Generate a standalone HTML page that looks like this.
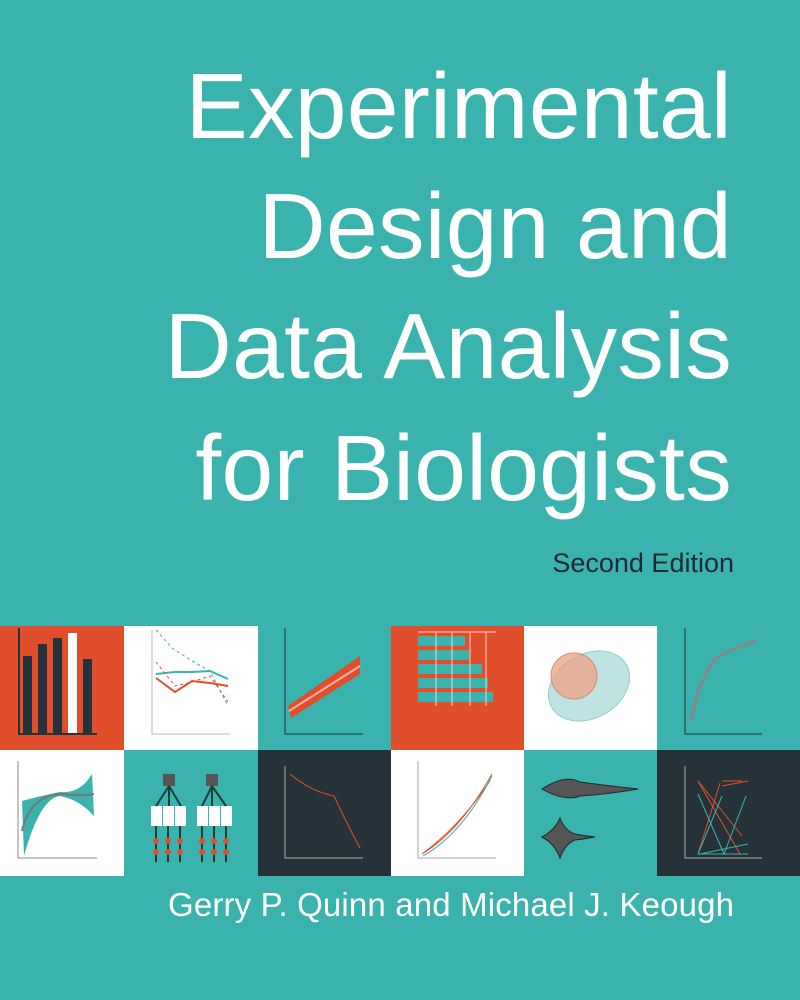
<!DOCTYPE html>
<html><head><style>
body{margin:0;width:800px;height:1000px;background:#3ab3ae;position:relative;overflow:hidden;font-family:"Liberation Sans",sans-serif;color:#fff}
.t{position:absolute;right:68px;font-size:93px;line-height:1;white-space:nowrap;letter-spacing:0.3px}
.se{position:absolute;right:66px;top:548px;font-size:27px;color:#1f2a30}
.au{position:absolute;left:168px;top:886px;font-size:33px;letter-spacing:0.15px}
</style></head><body>
<div class="t" style="top:60px">Experimental</div>
<div class="t" style="top:180px">Design and</div>
<div class="t" style="top:300px">Data Analysis</div>
<div class="t" style="top:422px">for Biologists</div>
<div class="se">Second Edition</div>
<svg style="position:absolute;left:0;top:626px" width="800" height="250">
<rect x="0" y="0" width="124" height="124" fill="#e04e2c"/>
<rect x="124" y="0" width="134" height="124" fill="#fff"/>
<rect x="391" y="0" width="133" height="124" fill="#e04e2c"/>
<rect x="524" y="0" width="133" height="124" fill="#fff"/>
<rect x="0" y="124" width="124" height="126" fill="#fff"/>
<rect x="258" y="124" width="133" height="126" fill="#26323a"/>
<rect x="391" y="124" width="133" height="126" fill="#fff"/>
<rect x="657" y="124" width="143" height="126" fill="#26323a"/>
<g fill="#26323a"><rect x="23" y="30" width="9" height="78"/><rect x="38" y="18" width="9" height="90"/><rect x="53" y="12" width="9" height="96"/><rect x="83" y="33" width="9" height="75"/></g>
<rect x="68" y="7" width="9" height="101" fill="#fff"/>
<path d="M19 2V108H97" stroke="#26323a" stroke-width="2" fill="none"/>
<path d="M152 4V108H230" stroke="#bbb" fill="none"/>
<path d="M156 4L172 22L192 35L210 45L228 80" stroke="#3ab3ae" stroke-dasharray="3 3" fill="none"/>
<path d="M156 48L175 46L192 46L210 45L228 53" stroke="#3ab3ae" stroke-width="2" fill="none"/>
<path d="M156 52L175 66L192 55L210 57L228 60" stroke="#e04e2c" stroke-width="2" fill="none"/>
<path d="M156 36L175 60L192 56L210 50L228 76" stroke="#e04e2c" stroke-dasharray="3 3" fill="none"/>
<path d="M285 2V108H363" stroke="#26323a" fill="none"/>
<path d="M288 80L360 30L360 48L291 92Z" fill="#e04e2c"/><path d="M289 85L360 40" stroke="#f7b0a0" stroke-width="2"/>
<g fill="#3ab3ae"><rect x="418" y="10" width="47" height="10"/><rect x="418" y="24" width="51" height="10"/><rect x="418" y="38" width="64" height="10"/><rect x="418" y="52" width="70" height="10"/><rect x="418" y="66" width="75" height="10"/></g>
<path d="M418 6H496M436 6V80M452 6V80M470 6V80M486 6V80" stroke="#f8d0c0" fill="none"/>
<ellipse cx="589" cy="60" rx="43" ry="32" transform="rotate(-30 589 60)" fill="#bfe3e2" stroke="#8fcfcc"/>
<circle cx="574" cy="50" r="23" fill="#eea283" fill-opacity=".75" stroke="#e08a70"/>
<path d="M685 2V108H762" stroke="#26323a" fill="none"/>
<path d="M690 95L700 60L712 36L722 28L738 22L756 14" stroke="#888" stroke-width="3" fill="none"/>
<path d="M18 135V232H97" stroke="#888" fill="none"/>
<path d="M22 175Q40 170 60 166Q80 168 92 148L94 190Q80 174 60 170Q40 172 24 230Z" fill="#3ab3ae"/>
<path d="M22 205Q30 170 60 168Q85 170 94 168" stroke="#777" stroke-width="2" fill="none"/>
<rect x="163" y="148" width="12" height="12" fill="#555"/><rect x="206" y="148" width="12" height="12" fill="#555"/>
<g fill="#fff"><rect x="151" y="180" width="11" height="20"/><rect x="163" y="180" width="11" height="20"/><rect x="175" y="180" width="11" height="20"/><rect x="197" y="180" width="11" height="20"/><rect x="209" y="180" width="11" height="20"/><rect x="221" y="180" width="11" height="20"/></g>
<path d="M169 160L156 180M169 160V180M169 160L181 180M212 160L202 180M212 160V180M212 160L226 180M156 200V236M168 200V236M180 200V236M202 200V236M214 200V236M226 200V236" stroke="#1f3b3a" stroke-width="2"/>
<g fill="#e04e2c"><circle cx="156" cy="215" r="3"/><circle cx="168" cy="215" r="3"/><circle cx="180" cy="215" r="3"/><circle cx="202" cy="215" r="3"/><circle cx="214" cy="215" r="3"/><circle cx="226" cy="215" r="3"/><circle cx="156" cy="226" r="3"/><circle cx="168" cy="226" r="3"/><circle cx="180" cy="226" r="3"/><circle cx="202" cy="226" r="3"/><circle cx="214" cy="226" r="3"/><circle cx="226" cy="226" r="3"/></g>
<path d="M285 140V232H363" stroke="#aaa" fill="none"/>
<path d="M290 148Q310 165 334 170Q348 200 360 222" stroke="#e04e2c" fill="none"/>
<path d="M418 135V232H496" stroke="#aaa" fill="none"/>
<path d="M422 228Q460 205 492 148M422 228Q460 200 490 155" stroke="#e04e2c" fill="none"/><path d="M423 230Q462 208 492 150" stroke="#3ab3ae" fill="none"/>
<path d="M542 163Q565 148 580 156Q610 160 638 163Q610 168 580 170Q565 176 542 163Z" fill="#555" stroke="#1f2a30"/>
<path d="M542 211Q555 204 560 192Q565 205 575 208Q585 210 595 211Q585 213 575 214Q565 218 560 232Q555 218 542 211Z" fill="#555" stroke="#1f2a30"/>
<path d="M685 140V232H762" stroke="#aaa" fill="none"/>
<path d="M698 155L742 210M698 155L740 228M720 157L698 228M722 155L742 155M722 160L748 155" stroke="#e04e2c" fill="none"/>
<path d="M698 168L724 228L746 170M700 228L748 218M722 170L698 228L748 228" stroke="#3ab3ae" fill="none"/>
</svg>
<div class="au">Gerry P. Quinn and Michael J. Keough</div>
</body></html>
